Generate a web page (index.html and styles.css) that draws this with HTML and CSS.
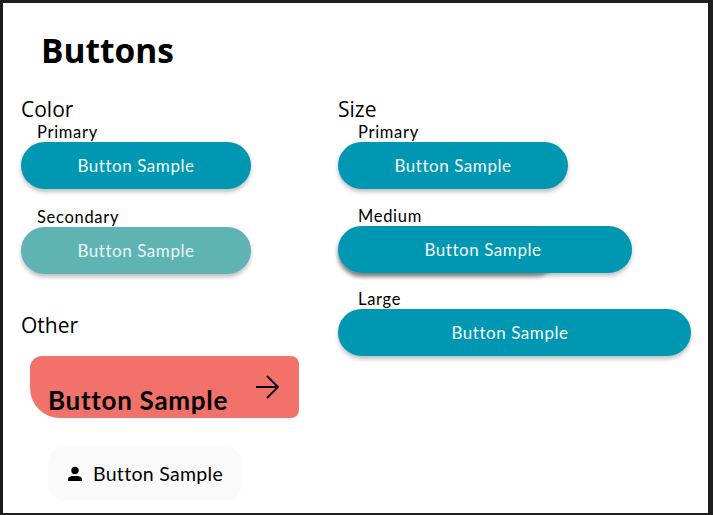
FILE: index.html
```html
<!DOCTYPE html>
<html>
  <head>
    <title>Buttons</title>
    <meta charset="UTF-8">
    <link rel="stylesheet" href="styles.css">
  </head>
  <body>
    <div class="frame">
      <h1>Buttons</h1>
      <div class="columns">
        <div class="col">
          <h2>Color</h2>
          <div class="label">Primary</div>
          <button class="btn">Button Sample</button>
          <div class="label label-next">Secondary</div>
          <button class="btn btn-secondary">Button Sample</button>
          <h2 class="other-title">Other</h2>
          <button class="btn-coral">
            <span>Button Sample</span>
            <svg class="arrow" width="24" height="24" viewBox="0 0 24 24" fill="none" stroke="#0a0a0a" stroke-width="1.8">
              <path d="M1 12H22.5M12 1L23 12L12 23"/>
            </svg>
          </button>
          <button class="btn-ghost">
            <svg width="16" height="16" viewBox="0 0 16 16" fill="#000">
              <circle cx="8" cy="4.4" r="3.7"/>
              <path d="M1 15V13.2C1 11 4 10 6 10H10C12 10 15 11 15 13.2V15Z"/>
            </svg>
            <span>Button Sample</span>
          </button>
        </div>
        <div class="col">
          <h2>Size</h2>
          <div class="label label-size">Primary</div>
          <button class="btn">Button Sample</button>
          <div class="label label-size label-medium">Medium</div>
          <div class="stack">
            <div class="btn-under"></div>
            <button class="btn btn-medium">Button Sample</button>
          </div>
          <div class="label label-size label-large">Large</div>
          <button class="btn btn-large">Button Sample</button>
        </div>
      </div>
    </div>
  </body>
</html>
```

FILE: styles.css
```css
/* page frame */
body {
	margin: 0;
	background-color: #fff;
	font-family: "Open Sans", sans-serif;
	color: #000;
}
.frame {
	box-sizing: border-box;
	height: 515px;
	overflow: hidden;
	border-style: solid;
	border-color: #1e1e1e;
	border-width: 3px 5px 2px 3px;
}
h1 {
	margin: 0;
	padding: 25px 0 0 38px;
	font-size: 33.5px;
	line-height: 44px;
	font-weight: 700;
}
h2 {
	margin: 0;
	font-size: 21px;
	line-height: 26px;
	font-weight: 400;
}
.columns {
	display: grid;
	grid-template-columns: 317px 1fr;
	padding: 24px 0 0 18px;
}
.label {
	padding-left: 16px;
	font-family: "Lato", sans-serif;
	font-size: 16.5px;
	letter-spacing: 0.7px;
	line-height: 20px;
	height: 20px;
	margin-top: 0;
	margin-bottom: 0;
}
.label-next {
	margin-top: 18px;
	margin-bottom: 0;
}
.label-size {
	padding-left: 20px;
}
.label-medium {
	margin-top: 17px;
	margin-bottom: 0;
}
.label-large {
	margin-top: 16px;
	margin-bottom: 0;
}
/* pill buttons */
.btn {
	display: block;
	width: 230px;
	height: 47px;
	padding: 0;
	border: none;
	border-radius: 24px;
	background-color: #0097b2;
	color: #f2fbfc;
	font-family: "Lato", sans-serif;
	font-size: 17px;
	letter-spacing: 0.55px;
	text-align: center;
	box-shadow: 0 3px 4px rgba(0, 0, 0, 0.25);
}
.btn-secondary {
	background-color: #5fb3b3;
	color: #eaf7f7;
}
.stack {
	position: relative;
}
.btn-under {
	position: absolute;
	top: 0;
	left: 0;
	width: 220px;
	height: 47px;
	border-radius: 24px;
	box-shadow: 0 4px 4px rgba(0, 0, 0, 0.35);
}
.btn-medium {
	position: relative;
	width: 294px;
	padding-right: 4px;
}
.btn-large {
	width: 353px;
	padding-right: 9px;
}
/* other buttons */
.other-title {
	margin-top: 38px;
}
.btn-coral {
	display: flex;
	justify-content: space-between;
	width: 269px;
	height: 62px;
	margin: 18px 0 0 9px;
	padding: 20px 20px 0 18px;
	border: none;
	border-radius: 12px 8px 8px 30px;
	background-color: #f2716a;
	color: #000;
	font-family: "Lato", sans-serif;
	font-size: 26px;
	letter-spacing: 0.7px;
	font-weight: 700;
	box-sizing: border-box;
	text-align: left;
}
.btn-coral span {
	padding-top: 3px;
	line-height: 44px;
	margin-top: -1px;
}
.arrow {
	margin-top: -1px;
	flex: none;
}
.btn-ghost {
	display: flex;
	align-items: center;
	gap: 10px;
	width: 194px;
	height: 53px;
	margin: 29px 0 0 27px;
	padding: 0 0 0 19px;
	border: none;
	border-radius: 16px;
	background-color: #fafafa;
	color: #000;
	font-family: "Lato", sans-serif;
	font-size: 19.5px;
	letter-spacing: 0.3px;
	box-sizing: border-box;
}
```
